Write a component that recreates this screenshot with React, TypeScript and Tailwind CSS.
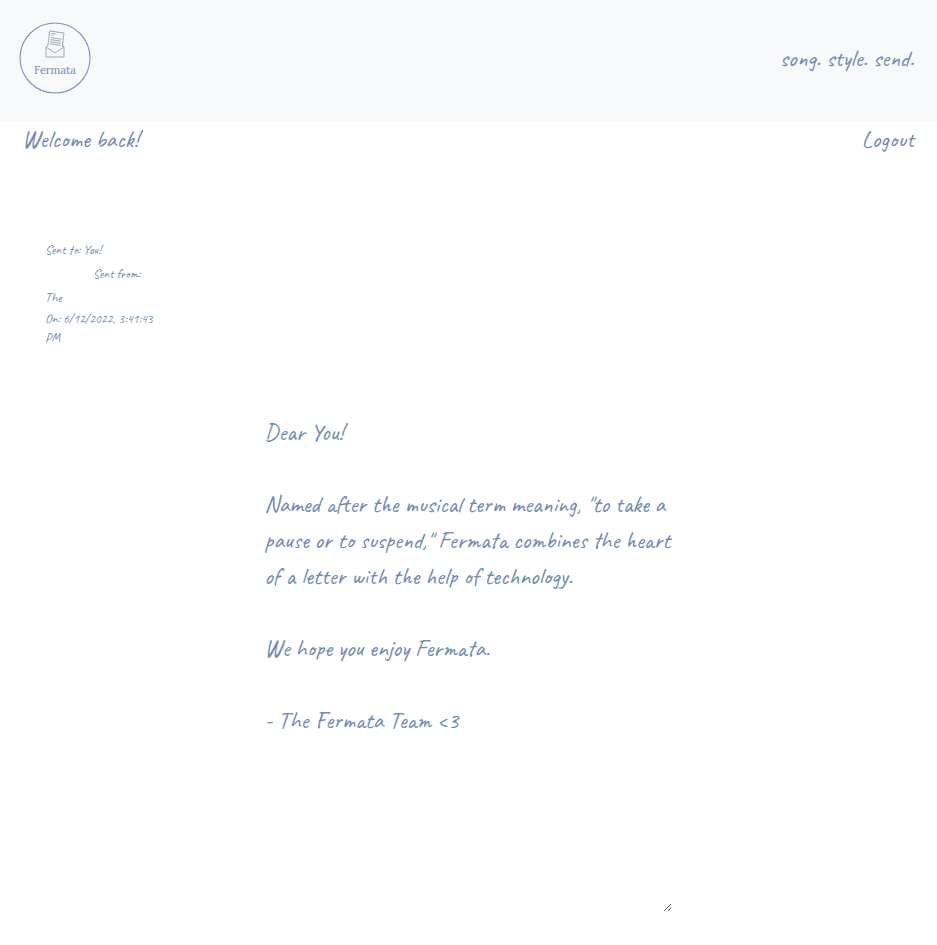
const letter = `Dear You!

Named after the musical term meaning, "to take a pause or to suspend," Fermata combines the heart of a letter with the help of technology.

We hope you enjoy Fermata.

- The Fermata Team <3`;

function Logo() {
  return (
    <svg viewBox="0 0 72 72" className="size-18" role="img" aria-label="Fermata" fill="none" stroke="#7d94b8">
      <circle cx="36" cy="36" r="35" strokeWidth="1.1" />
      <g strokeWidth="0.8" strokeLinejoin="round">
        <path d="M28.8 24 L30.8 9 L45 11 L43.2 25" />
        <path d="M32.5 11.5 L36.5 12 M32.2 13 L34.2 13.3 M31.8 15.7 L42.5 17.2 M31.5 17.7 L42 19.2 M31 19.8 L41.8 21.3 M30.8 21.8 L41.5 23.3" />
        <path d="M29 23 L27 25 V35 H45 V25 L43.5 23" />
        <path d="M27 25 L36 31 L45 25" />
      </g>
      <text x="36" y="52" textAnchor="middle" fontSize="11" fill="#6c85ad" stroke="none" className="font-['Lora','Liberation_Serif',serif]">
        Fermata
      </text>
    </svg>
  );
}

export default function App() {
  return (
    <div className="min-h-screen bg-white font-['Caveat',cursive] text-2xl leading-9 text-[#728bb2]">
      <header className="flex items-center justify-between bg-[#f8f9fb] pt-5.5 pr-5.75 pb-6.75 pl-4.75">
        <a href="#home">
          <Logo />
        </a>
        <p>song. style. send.</p>
      </header>
      <nav className="flex items-center justify-between pr-5.75 pl-5.5">
        <p>Welcome back!</p>
        <button type="button">Logout</button>
      </nav>
      <main className="flex flex-col px-11.25 pt-20.25">
        <section className="w-28 text-[13px] leading-6">
          <p>Sent to: You!</p>
          <p className="pl-12">Sent from:</p>
          <p>The</p>
          <p className="leading-[19px]">On: 6/12/2022, 3:41:43 PM</p>
        </section>
        <textarea
          aria-label="Letter"
          defaultValue={letter}
          className="mt-16.5 ml-[25.9%] h-124.5 w-102 max-w-full resize border-0 bg-transparent outline-none"
        />
      </main>
    </div>
  );
}
